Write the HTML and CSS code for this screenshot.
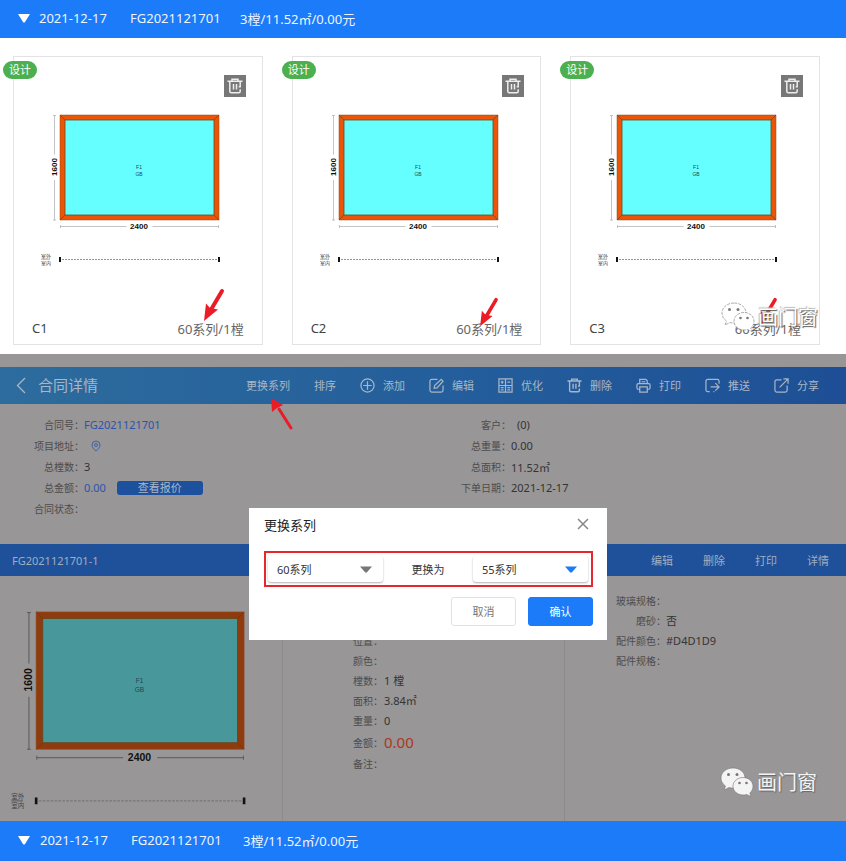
FILE: index.html
```html
<!DOCTYPE html>
<html lang="zh-CN">
<head>
<meta charset="utf-8">
<meta name="viewport" content="width=device-width, initial-scale=1">
<title>合同详情</title>
<link rel="stylesheet" href="styles.css">
</head>
<body>
<svg class="sprite" aria-hidden="true">
  <symbol id="trash" viewBox="0 0 16 16">
    <path d="M.5 3.200h15M5 3V1.200h6V3M2.800 3.500v9.700q0 1.500 1.500 1.500h7.400q1.500 0 1.500-1.500v-2M13.200 3.500v5.200h-1.500M6.500 6v5.500M9.500 6v5.500" fill="none" stroke="currentColor" stroke-width="1.5"/>
  </symbol>
  <symbol id="window" viewBox="0 0 182 156">
    <path class="frame" d="M20 3h159v105H20z"/>
    <path class="glass" d="M25 8h149v95H25z"/>
    <path class="joint" d="M20 3l5 5M179 3l-5 5M20 108l5-5M179 108l-5-5"/>
    <path class="dim" d="M14.500 3.500v39M14.500 68v40M13 3.500h3M13 108h3M20.500 114.500h66M112.500 114.500h66M20.500 113v3M178.500 113v3M1 147.500h9"/>
    <path class="dash" d="M22 147.500h156"/>
    <path class="stop" d="M19 145h2v5h-2zM178 145h2v5h-2z"/>
  </symbol>
  <symbol id="arrow" viewBox="0 0 24 36">
    <path d="M20 3L8.500 22.500" stroke="#eb1c26" stroke-width="4" stroke-linecap="round"/>
    <path d="M2 33L4 15.500L8 20L16 21.500z" fill="#eb1c26"/>
  </symbol>
  <symbol id="wechat" viewBox="0 0 34 32">
    <path d="M13 1C6 1 1 5.500 1 11c0 3.500 1.800 6 4.500 8L4 23l5-2.500q2 .5 4 .5C20 21 25 16.500 25 11S20 1 13 1z"/>
    <path d="M23 10.500c-5.500 0-10 3.800-10 8.700s4.500 8.800 10 8.800q2 0 3.500-.5l4.500 2-1.200-3.500c2-1.600 3.200-4 3.200-6.800 0-4.900-4.500-8.700-10-8.700z"/>
    <g class="eyes"><circle cx="8.500" cy="7.500" r="1.500"/><circle cx="17" cy="7.500" r="1.500"/><circle cx="19.500" cy="16" r="1.300"/><circle cx="26.500" cy="16" r="1.300"/></g>
  </symbol>
</svg>

<header class="summary">
  <svg class="caret" viewBox="0 0 12 9" aria-hidden="true"><path d="M0 0h12L7 8q-1 1-2 0z" fill="#fff"/></svg>
  <span class="date">2021-12-17</span><span class="number">FG2021121701</span><span>3樘/11.52㎡/0.00元</span>
</header>

<main class="cards">
  <article class="card">
    <span class="badge">设计</span>
    <button class="remove" aria-label="删除 C1"><svg><use href="#trash"/></svg></button>
    <svg class="drawing" viewBox="0 0 182 156"><use href="#window"/><text class="size" x="99" y="117">2400</text><text class="size" transform="rotate(-90)" x="-55" y="17">1600</text><text class="mark" x="99" y="57">F1</text><text class="mark" x="99" y="64">GB</text><text class="side" x="6" y="146">室外</text><text class="side" x="6" y="153">室内</text></svg>
    <footer class="caption"><h2>C1</h2><span>60系列/1樘</span></footer>
    <svg class="arrow"><use href="#arrow"/></svg>
  </article>
  <article class="card">
    <span class="badge">设计</span>
    <button class="remove" aria-label="删除 C2"><svg><use href="#trash"/></svg></button>
    <svg class="drawing" viewBox="0 0 182 156"><use href="#window"/><text class="size" x="99" y="117">2400</text><text class="size" transform="rotate(-90)" x="-55" y="17">1600</text><text class="mark" x="99" y="57">F1</text><text class="mark" x="99" y="64">GB</text><text class="side" x="6" y="146">室外</text><text class="side" x="6" y="153">室内</text></svg>
    <footer class="caption"><h2>C2</h2><span>60系列/1樘</span></footer>
    <svg class="arrow arrow-low"><use href="#arrow"/></svg>
  </article>
  <article class="card">
    <span class="badge">设计</span>
    <button class="remove" aria-label="删除 C3"><svg><use href="#trash"/></svg></button>
    <svg class="drawing" viewBox="0 0 182 156"><use href="#window"/><text class="size" x="99" y="117">2400</text><text class="size" transform="rotate(-90)" x="-55" y="17">1600</text><text class="mark" x="99" y="57">F1</text><text class="mark" x="99" y="64">GB</text><text class="side" x="6" y="146">室外</text><text class="side" x="6" y="153">室内</text></svg>
    <footer class="caption"><h2>C3</h2><span>60系列/1樘</span></footer>
    <svg class="arrow arrow-low"><use href="#arrow"/></svg>
    <div class="brand brand-light"><svg><use href="#wechat"/></svg><span>画门窗</span></div>
  </article>
</main>

<section class="contract">
  <header class="toolbar">
    <button class="back" aria-label="返回"><svg viewBox="0 0 10 17"><path d="M9 1L1.500 8.500L9 16" fill="none" stroke="currentColor" stroke-width="1.300"/></svg></button>
    <h1>合同详情</h1>
    <nav class="tools">
      <button>更换系列</button>
      <button>排序</button>
      <button><svg viewBox="0 0 16 16"><circle cx="8" cy="8" r="7"/><path d="M8 3.500v9M3.500 8h9"/></svg>添加</button>
      <button><svg viewBox="0 0 16 16"><path d="M9 1.500H3Q1 1.500 1 3.500V13q0 2 2 2h10q2 0 2-2V8M5.500 11l.5-3 7-6.500 2 2L8.500 10.500z"/></svg>编辑</button>
      <button><svg viewBox="0 0 16 16"><path d="M1 1h14v14H1zM8 1v14M1 8h14M3 4.500h3M4.500 3v3M10 4.500h3M3 10.300h3M3 12.700h3M10 10.300h3M10 12.700h3"/></svg>优化</button>
      <button><svg><use href="#trash"/></svg>删除</button>
      <button><svg viewBox="0 0 16 16"><path d="M4 6V1.500h6.500L12 3v3M4 12H2.500Q1 12 1 10.500v-3Q1 6 2.500 6h11Q15 6 15 7.500v3q0 1.500-1.500 1.500H12M4 9.500h8V15H4zM6 4h4"/></svg>打印</button>
      <button><svg viewBox="0 0 16 16"><path d="M5 14.500H3q-2 0-2-2v-9q0-2 2-2h10q2 0 2 2V6M6 9.500h9M11 5.500l4 4-4 4M9 14.500h1"/></svg>推送</button>
      <button><svg viewBox="0 0 16 16"><path d="M8 2H3Q1 2 1 4v9q0 2 2 2h9q2 0 2-2V8M6 10l9-9M10 1h5v5"/></svg>分享</button>
    </nav>
  </header>

  <div class="info">
    <dl class="fields">
      <div><dt>合同号：</dt><dd><a href="#contract">FG2021121701</a></dd></div>
      <div><dt>项目地址：</dt><dd><svg class="pin" viewBox="0 0 10 12"><path d="M5 11C2.500 8.800 1 7 1 5a4 4 0 0 1 8 0c0 2-1.500 3.800-4 6z"/><circle cx="5" cy="5" r="1.500"/></svg></dd></div>
      <div><dt>总樘数：</dt><dd>3</dd></div>
      <div><dt>总金额：</dt><dd><a href="#price">0.00</a><button class="quote">查看报价</button></dd></div>
      <div><dt>合同状态：</dt><dd></dd></div>
    </dl>
    <dl class="fields">
      <div><dt>客户：</dt><dd class="customer">(0)</dd></div>
      <div><dt>总重量：</dt><dd>0.00</dd></div>
      <div><dt>总面积：</dt><dd>11.52㎡</dd></div>
      <div><dt>下单日期：</dt><dd>2021-12-17</dd></div>
    </dl>
  </div>

  <header class="item-bar">
    <h2>FG2021121701-1</h2>
    <nav><button>编辑</button><button>删除</button><button>打印</button><button>详情</button></nav>
  </header>

  <div class="item">
    <div class="item-drawing">
      <svg class="drawing" viewBox="0 0 182 156"><use href="#window"/><text class="size" x="99" y="117">2400</text><text class="size" transform="rotate(-90)" x="-55" y="17">1600</text><text class="mark" x="99" y="57">F1</text><text class="mark" x="99" y="64">GB</text><text class="side" x="6" y="146">室外</text><text class="side" x="6" y="153">室内</text></svg>
    </div>
    <dl class="fields specs">
      <div><dt>位置：</dt><dd></dd></div>
      <div><dt>颜色：</dt><dd></dd></div>
      <div><dt>樘数：</dt><dd>1 樘</dd></div>
      <div><dt>面积：</dt><dd>3.84㎡</dd></div>
      <div><dt>重量：</dt><dd>0</dd></div>
      <div class="amount"><dt>金额：</dt><dd>0.00</dd></div>
      <div><dt>备注：</dt><dd></dd></div>
    </dl>
    <dl class="fields parts">
      <div><dt>玻璃规格：</dt><dd></dd></div>
      <div><dt>磨砂：</dt><dd>否</dd></div>
      <div><dt>配件颜色：</dt><dd>#D4D1D9</dd></div>
      <div><dt>配件规格：</dt><dd></dd></div>
    </dl>
  </div>

  <svg class="pointer" viewBox="0 0 24 36" aria-hidden="true"><path d="M21 31L9 12" stroke="#eb1c26" stroke-width="3" stroke-linecap="round"/><path d="M1 1L2 15L7 11L13 8z" fill="#eb1c26"/></svg>
  <div class="brand brand-dark"><svg><use href="#wechat"/></svg><span>画门窗</span></div>

  <div class="overlay">
    <form class="dialog" role="dialog" aria-labelledby="dialog-title">
      <header><h2 id="dialog-title">更换系列</h2><button type="button" class="close" aria-label="关闭"><svg viewBox="0 0 12 12"><path d="M1 1l10 10M11 1L1 11" stroke="currentColor" stroke-width="1.500"/></svg></button></header>
      <div class="swap">
        <span class="picker"><select aria-label="原系列"><option>60系列</option><option>55系列</option></select><svg viewBox="0 0 12 7"><path d="M0 .5h12L7 6.300q-1 .8-2 0z" fill="#777"/></svg></span>
        <span class="to">更换为</span>
        <span class="picker"><select aria-label="新系列"><option>55系列</option><option>60系列</option></select><svg viewBox="0 0 12 7"><path d="M0 .5h12L7 6.300q-1 .8-2 0z" fill="#1b7bf9"/></svg></span>
      </div>
      <footer><button type="button">取消</button><button type="submit" class="primary">确认</button></footer>
    </form>
  </div>
</section>

<footer class="summary summary-end">
  <svg class="caret" viewBox="0 0 12 9" aria-hidden="true"><path d="M0 0h12L7 8q-1 1-2 0z" fill="#fff"/></svg>
  <span class="date">2021-12-17</span><span class="number">FG2021121701</span><span>3樘/11.52㎡/0.00元</span>
</footer>
</body>
</html>
```
FILE: styles.css
```css
* { box-sizing: border-box; margin: 0; padding: 0; }

body {
  font-family: "Noto Sans", "Noto Sans CJK SC", sans-serif;
  font-size: 11px;
  color: #333;
  background: #fff;
}

button, select { font: inherit; color: inherit; border: 0; background: none; cursor: pointer; }
h1, h2 { font-weight: 400; }
a { color: inherit; text-decoration: none; }
.sprite { position: absolute; width: 0; height: 0; }

.summary {
  display: flex;
  align-items: center;
  height: 38px;
  padding: 0 18px 2px;
  background: #1b7bf9;
  color: #eef5ff;
  font-size: 13px;
}
.summary-end { height: 40px; }
.caret { width: 12px; height: 9px; margin-right: 9px; }
.date { min-width: 72px; margin-right: 19px; }
.number { min-width: 92px; margin-right: 18px; }
.summary-end .caret { margin-right: 10px; }
.summary-end .number { margin-right: 20px; }

.cards {
  display: grid;
  grid-template-columns: repeat(3, 1fr);
  gap: 29px;
  padding: 18px 26px 9px 13px;
}
.card {
  position: relative;
  border: 1px solid #e4e2e4;
  padding-top: 55px;
}
.badge {
  position: absolute;
  top: 4px;
  left: -11px;
  padding: 0 6px;
  border-radius: 9px;
  background: #4caf50;
  color: #fff;
  line-height: 18px;
}
.remove {
  position: absolute;
  top: 18px;
  right: 16px;
  display: grid;
  place-items: center;
  width: 22px;
  height: 22px;
  background: #777;
  color: #eee;
}
.remove svg { width: 16px; height: 16px; }

.drawing { display: block; width: 182px; height: 156px; margin-left: 26px; overflow: visible; }
.frame { fill: var(--frame, #eb5505); stroke: #8a4a20; stroke-width: .5; }
.glass { fill: var(--glass, #66ffff); stroke: #6a4a20; stroke-width: .8; }
.joint { stroke: #7a3208; stroke-width: .6; }
.dim { fill: none; stroke: var(--dim, #aaa); stroke-width: .7; }
.dash { stroke: #777; stroke-width: .8; stroke-dasharray: 2 1; }
.stop { fill: #111; }
.drawing text { text-anchor: middle; fill: #111; }
.drawing .size { font-size: 8px; font-weight: 700; font-family: "Liberation Sans", sans-serif; }
.drawing .mark { font-size: 5px; fill: #245; font-family: "Liberation Sans", sans-serif; }
.drawing .side { font-size: 5px; fill: #444; }

.caption {
  display: flex;
  justify-content: space-between;
  align-items: center;
  height: 20px;
  margin: 50px 18px 6px;
  font-size: 13px;
  color: #666;
}
.caption h2 { font-size: 13px; color: #444; }
.arrow { position: absolute; right: 36px; bottom: 20px; width: 24px; height: 36px; }
.arrow-low { right: 39px; bottom: 15px; height: 32px; }

.brand { position: absolute; display: flex; align-items: center; gap: 3px; color: #fff; font-size: 20px; line-height: 30px; }
.brand svg { width: 34px; height: 32px; fill: #fff; stroke: #777; stroke-width: .6; }
.eyes { fill: #777; stroke: none; }
.brand-light { right: 1px; bottom: 10px; text-shadow: 1px 1px 1px #555, -1px -1px 1px #bbb; }
.brand-light svg { stroke-dasharray: 3 1; }
.brand-dark { right: 29px; bottom: 22px; color: #f4f4f4; text-shadow: 1px 1px 1px #666; }
.brand-dark svg { fill: #f4f4f4; }

.contract {
  --frame: #8f3b0e;
  --glass: #48989b;
  --dim: #555;
  position: relative;
  padding-top: 13px;
  background: #989697;
}
.toolbar {
  display: flex;
  align-items: center;
  height: 37px;
  padding: 0 27px 0 16px;
  background: linear-gradient(90deg, #2d6c9d, #235c9b 60%, #1e4f96);
  color: #a9b7c5;
}
.back { display: flex; margin-right: 12px; }
.back svg { width: 10px; height: 17px; }
.toolbar h1 { font-size: 15px; line-height: 20px; padding-bottom: 2px; }
.tools { display: flex; gap: 24px; margin-left: auto; }
.tools button { display: flex; align-items: center; gap: 8px; line-height: 16px; }
.tools svg { width: 15px; height: 15px; fill: none; stroke: currentColor; stroke-width: 1.3; }

.info { display: grid; grid-template-columns: 1fr 1fr; gap: 8px; padding: 10px 0 25px; }
.fields div { display: flex; align-items: center; height: 21px; }
.fields dt { width: 84px; text-align: right; font-size: 10px; color: #4d4c4d; }
.fields dd { display: flex; align-items: center; color: #343434; }
.fields a { color: #2955ab; }
.fields .customer { padding-left: 6px; }
.pin { width: 10px; height: 12px; margin-left: 7px; fill: none; stroke: #2955ab; stroke-width: .8; }
.quote {
  width: 86px;
  margin-left: 11px;
  border-radius: 3px;
  background: #1d509d;
  color: #a9b7c5;
  line-height: 14px;
}

.item-bar {
  display: flex;
  align-items: center;
  justify-content: space-between;
  height: 32px;
  padding: 0 17px 0 12px;
  background: #1e5199;
  color: #a0aec0;
}
.item-bar h2 { font-size: 11px; }
.item-bar nav { display: flex; gap: 30px; }

.item { display: grid; grid-template-columns: repeat(3, 1fr); height: 245px; }
.item > * + * { border-left: 1px solid #8c8a8b; }
.item-drawing { padding: 32px 34px 0 10px; }
.item .drawing { width: 100%; height: auto; margin: 0; }
.item .fields div { height: 20px; }
.specs { padding: 54px 0 0 70px; }
.specs dt { width: 31px; text-align: left; }
.item .specs .amount { height: 22px; margin-top: 1px; }
.specs .amount dd { font-size: 15px; color: #ab391e; }
.parts { padding-top: 14px; }
.parts dt { width: 101px; }

.pointer { position: absolute; top: 43px; left: 270px; width: 24px; height: 36px; }

.overlay { position: absolute; inset: 0; padding: 154px 0 0 10px; }
.dialog { width: 358px; margin: 0 auto; padding: 7px 14px 14px 15px; background: #fff; }
.dialog header { display: flex; align-items: center; justify-content: space-between; height: 18px; margin-bottom: 18px; }
.dialog h2 { font-size: 13px; color: #222; }
.close { display: flex; margin-right: 4px; color: #888; }
.close svg { width: 12px; height: 12px; }
.swap {
  display: flex;
  align-items: center;
  justify-content: space-between;
  height: 36px;
  padding: 0 3px 0 2px;
  border: 2px solid #e5282e;
}
.picker { position: relative; }
.picker select {
  appearance: none;
  width: 115px;
  height: 26px;
  padding: 0 9px;
  border-radius: 3px;
  background: #fff;
  box-shadow: 0 1px 2px rgba(0, 0, 0, .3);
}
.picker svg { position: absolute; top: 10px; right: 11px; width: 12px; height: 7px; pointer-events: none; }
.dialog footer { display: flex; justify-content: flex-end; gap: 12px; margin-top: 10px; }
.dialog footer button { width: 65px; height: 29px; padding-bottom: 2px; border: 1px solid #e2e2e2; border-radius: 3px; color: #777; }
.dialog footer .primary { border-color: #1b7bf9; background: #1b7bf9; color: #fff; }
```
